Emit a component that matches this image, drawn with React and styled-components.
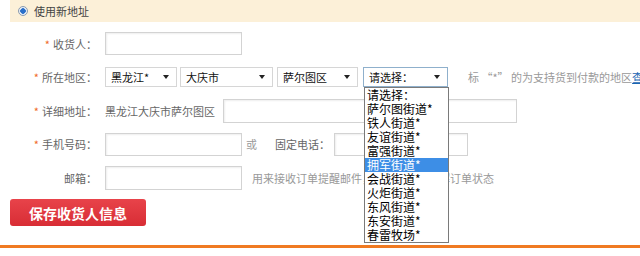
import React from "react";
import styled, { createGlobalStyle } from "styled-components";

const GlobalStyle = createGlobalStyle`
  body {
    margin: 0;
    background: #fff;
    font-family: "Noto Sans CJK SC", "Liberation Sans", sans-serif;
    font-size: 11px;
    color: #666;
  }
`;

const Page = styled.div`
  width: 640px;
  height: 256px;
  overflow: hidden;
  position: relative;
`;

const Content = styled.div`
  padding-left: 10px;
`;

const Banner = styled.div`
  height: 22px;
  background: #fcf0d8;
  display: flex;
  align-items: center;
  padding-left: 8px;
  gap: 6px;
  color: #444;
  font-size: 11px;
`;

const Radio = styled.span`
  width: 10px;
  height: 10px;
  border-radius: 50%;
  box-sizing: border-box;
  border: 1px solid #8a9bb0;
  background: radial-gradient(circle, #2a6fc9 0 2.5px, #e9eef5 3px);
`;

const Form = styled.div`
  padding-top: 5px;
`;

const Row = styled.div`
  display: flex;
  align-items: center;
  height: 33.5px;
  white-space: nowrap;
  & > * {
    flex-shrink: 0;
  }
`;

const Label = styled.span`
  width: 87px;
  margin-right: 8px;
  text-align: right;
  color: #666;
`;

const Star = styled.span`
  color: #f06a2a;
  margin-right: 3px;
`;

const Input = styled.div`
  width: ${(p) => p.$w}px;
  height: ${(p) => p.$h || 23}px;
  box-sizing: border-box;
  border: 1px solid #d3d3d3;
  box-shadow: inset 1px 1px 2px #eee;
  background: #fff;
  margin-left: ${(p) => p.$ml || 0}px;
`;

const Select = styled.div`
  position: relative;
  width: ${(p) => p.$w}px;
  height: 20px;
  box-sizing: border-box;
  border: 1px solid ${(p) => (p.$focus ? "#8fb0cc" : "#d6d6d6")};
  margin-left: ${(p) => p.$ml || 0}px;
  display: flex;
  align-items: center;
  padding-left: 5px;
  color: #111;
  font-size: 11px;
  background: #fff;
  &::after {
    content: "";
    position: absolute;
    right: 7px;
    top: 7px;
    border-left: 3.5px solid transparent;
    border-right: 3.5px solid transparent;
    border-top: 4px solid #222;
  }
`;

const Dropdown = styled.ul`
  position: absolute;
  top: 19px;
  left: 0;
  width: 85px;
  margin: 0;
  padding: 0;
  list-style: none;
  box-sizing: border-box;
  border: 1px solid #7a7a7a;
  background: #fff;
  z-index: 2;
`;

const Option = styled.li`
  height: 14px;
  line-height: 14px;
  padding-left: 2px;
  font-size: 12px;
  color: ${(p) => (p.$active ? "#fff" : "#000")};
  background: ${(p) => (p.$active ? "#3d8ee6" : "transparent")};
`;

const Note = styled.span`
  color: #999;
  margin-left: ${(p) => p.$ml || 0}px;
`;

const Link = styled.span`
  color: #1a66b3;
  text-decoration: underline;
`;

const Plain = styled.span`
  color: ${(p) => p.$c || "#666"};
  margin-left: ${(p) => p.$ml || 0}px;
  margin-right: ${(p) => p.$mr || 0}px;
`;

const SaveButton = styled.button`
  margin-top: 4.5px;
  width: 136px;
  height: 27px;
  border: none;
  border-radius: 3px;
  background: linear-gradient(#e8434a, #d82d35);
  color: #fff;
  font-family: inherit;
  font-size: 14px;
  font-weight: bold;
  padding: 0;
`;

const OrangeLine = styled.div`
  margin-top: 19px;
  height: 3px;
  background: #f07a22;
`;

const streets = [
  "请选择：",
  "萨尔图街道*",
  "铁人街道*",
  "友谊街道*",
  "富强街道*",
  "拥军街道*",
  "会战街道*",
  "火炬街道*",
  "东风街道*",
  "东安街道*",
  "春雷牧场*",
];

export default function App() {
  return (
    <Page>
      <GlobalStyle />
      <Content>
        <Banner>
          <Radio />
          <span>使用新地址</span>
        </Banner>
        <Form>
          <Row>
            <Label>
              <Star>*</Star>收货人：
            </Label>
            <Input $w={137} />
          </Row>
          <Row>
            <Label>
              <Star>*</Star>所在地区：
            </Label>
            <Select $w={72}>黑龙江*</Select>
            <Select $w={93} $ml={3}>
              大庆市
            </Select>
            <Select $w={81} $ml={4}>
              萨尔图区
            </Select>
            <Select $w={85} $ml={5} $focus>
              请选择：
              <Dropdown>
                {streets.map((s, i) => (
                  <Option key={s} $active={i === 5}>
                    {s}
                  </Option>
                ))}
              </Dropdown>
            </Select>
            <Note $ml={20}>
              标 “*” 的为支持货到付款的地区<Link>查</Link>
            </Note>
          </Row>
          <Row>
            <Label>
              <Star>*</Star>详细地址：
            </Label>
            <Plain $mr={8}>黑龙江大庆市萨尔图区</Plain>
            <Input $w={294} $h={24} />
          </Row>
          <Row>
            <Label>
              <Star>*</Star>手机号码：
            </Label>
            <Input $w={137} />
            <Plain $c="#999" $ml={4}>
              或
            </Plain>
            <Plain $ml={18}>固定电话：</Plain>
            <Input $w={134} $ml={4} />
          </Row>
          <Row>
            <Label>邮箱：</Label>
            <Input $w={137} $h={24} />
            <Note $ml={10}>用来接收订单提醒邮件，便于您及时了解订单状态</Note>
          </Row>
        </Form>
        <SaveButton>保存收货人信息</SaveButton>
      </Content>
      <OrangeLine />
    </Page>
  );
}
